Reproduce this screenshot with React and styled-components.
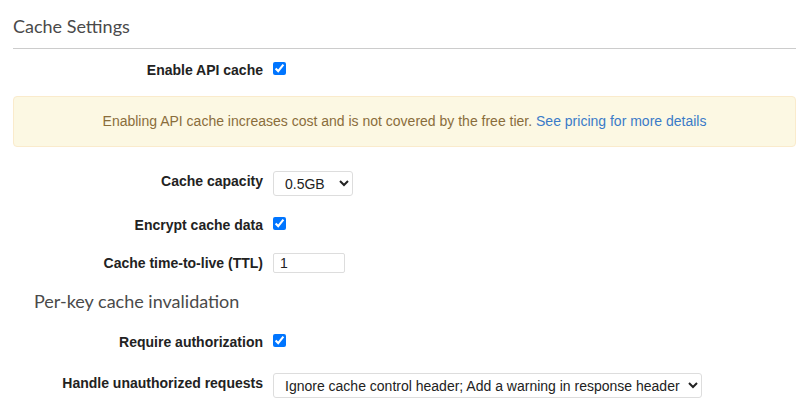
import React, { useState } from 'react';
import styled, { createGlobalStyle } from 'styled-components';

const GlobalStyle = createGlobalStyle`
  body {
    margin: 0;
    background: #fff;
    font-family: "Liberation Sans", Arial, sans-serif;
  }
`;

const Page = styled.div`
  padding: 0 11px 0 13px;
  display: flex;
  flex-direction: column;
`;

const SectionTitle = styled.h2`
  margin: 0;
  padding: 14px 0 10px;
  font-family: Lato, "Open Sans", sans-serif;
  font-weight: 400;
  font-size: 18px;
  line-height: 24px;
  color: #4a4a4a;
  border-bottom: 1px solid #ccc;
`;

const SubTitle = styled.h3`
  margin: ${p => p.$top}px 0 0 21px;
  font-family: Lato, "Open Sans", sans-serif;
  font-weight: 400;
  font-size: 18px;
  line-height: 24px;
  color: #4a4a4a;
`;

const Row = styled.div`
  display: grid;
  grid-template-columns: 250px 1fr;
  column-gap: 10px;
  align-items: center;
  height: ${p => p.$h}px;
  margin-top: ${p => p.$top}px;
`;

const Label = styled.label`
  text-align: right;
  font-size: 14px;
  font-weight: 700;
  color: #222;
  padding-bottom: ${p => p.$lift || 0}px;
`;

const Check = styled.input.attrs({ type: 'checkbox' })`
  margin: 0;
  width: 13px;
  height: 13px;
  accent-color: #0075ff;
  align-self: center;
  position: relative;
  top: -2px;
`;

const Alert = styled.div`
  margin-top: 14px;
  padding: 15px;
  background: #fcf8e3;
  border: 1px solid #faebcc;
  border-radius: 4px;
  color: #8a6d3b;
  font-size: 14px;
  line-height: 19px;
  text-align: center;

  a {
    color: #3a7bc8;
    text-decoration: none;
  }
`;

const Select = styled.select`
  width: ${p => p.$w}px;
  height: 25px;
  padding: 0 4px 0 7px;
  font-family: "Liberation Sans", Arial, sans-serif;
  font-size: 14px;
  color: #222;
  background: #fff;
  border: 1px solid #ddd;
  border-radius: 3px;
  outline: none;
`;

const TextInput = styled.input`
  width: 72px;
  height: 20px;
  box-sizing: border-box;
  padding: 0 6px;
  font-family: "Liberation Sans", Arial, sans-serif;
  font-size: 14px;
  color: #222;
  border: 1px solid #ddd;
  border-radius: 2px;
  outline: none;
`;

export default function App() {
  const [ttl, setTtl] = useState('1');
  const [capacity, setCapacity] = useState('0.5');
  const [handling, setHandling] = useState('warn');

  return (
    <Page>
      <GlobalStyle />
      <SectionTitle>Cache Settings</SectionTitle>

      <Row $h={24} $top={9}>
        <Label>Enable API cache</Label>
        <Check defaultChecked />
      </Row>

      <Alert>
        Enabling API cache increases cost and is not covered by the free tier.{' '}
        <a href="#">See pricing for more details</a>
      </Alert>

      <Row $h={25} $top={24}>
        <Label $lift={5}>Cache capacity</Label>
        <Select $w={80} value={capacity} onChange={e => setCapacity(e.target.value)}>
          <option value="0.5">0.5GB</option>
          <option value="1.6">1.6GB</option>
          <option value="6.1">6.1GB</option>
        </Select>
      </Row>

      <Row $h={20} $top={19}>
        <Label>Encrypt cache data</Label>
        <Check defaultChecked />
      </Row>

      <Row $h={20} $top={18}>
        <Label>Cache time-to-live (TTL)</Label>
        <TextInput value={ttl} onChange={e => setTtl(e.target.value)} />
      </Row>

      <SubTitle $top={16}>Per-key cache invalidation</SubTitle>

      <Row $h={20} $top={19}>
        <Label>Require authorization</Label>
        <Check defaultChecked />
      </Row>

      <Row $h={25} $top={21}>
        <Label $lift={5}>Handle unauthorized requests</Label>
        <Select $w={429} value={handling} onChange={e => setHandling(e.target.value)}>
          <option value="fail">Fail the request with 403 status code</option>
          <option value="ignore">Ignore cache control header</option>
          <option value="warn">Ignore cache control header; Add a warning in response header</option>
        </Select>
      </Row>
    </Page>
  );
}
